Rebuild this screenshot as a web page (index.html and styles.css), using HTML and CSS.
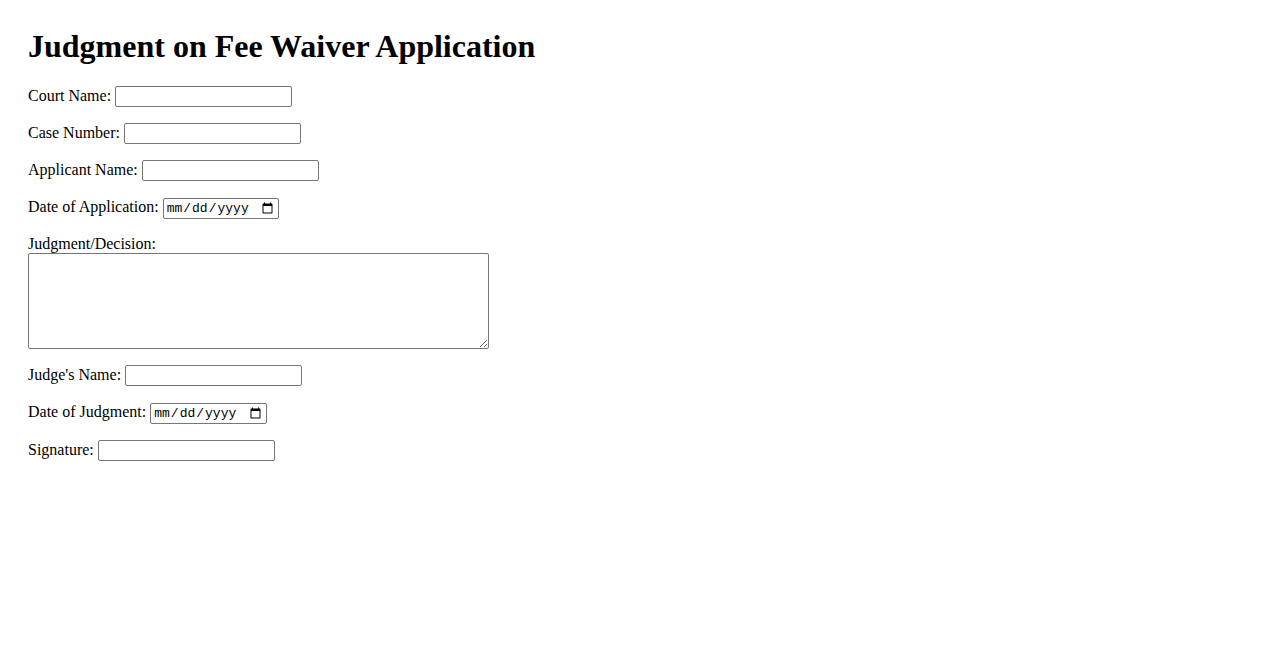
FILE: index.html
```html
<!DOCTYPE html>
<html lang="en">
<head>
<meta charset="utf-8">
<title>Judgment on Fee Waiver Application</title>
<link rel="stylesheet" href="styles.css">
</head>
<body>
<div class="page">
  <h1 class="title">Judgment on Fee Waiver Application</h1>
  <form class="form">
    <div class="field"><label for="court">Court Name:</label> <input class="text" id="court" type="text"></div>
    <div class="field"><label for="case">Case Number:</label> <input class="text" id="case" type="text"></div>
    <div class="field"><label for="applicant">Applicant Name:</label> <input class="text" id="applicant" type="text"></div>
    <div class="field"><label for="appdate">Date of Application:</label> <input class="date" id="appdate" type="date"></div>
    <div class="field"><label class="block" for="decision">Judgment/Decision:</label><textarea class="area" id="decision"></textarea></div>
    <div class="field"><label for="judge">Judge's Name:</label> <input class="text" id="judge" type="text"></div>
    <div class="field"><label for="jdate">Date of Judgment:</label> <input class="date date-j" id="jdate" type="date"></div>
    <div class="field"><label for="sig">Signature:</label> <input class="text" id="sig" type="text"></div>
  </form>
</div>
</body>
</html>
```
FILE: styles.css
```css
html, body {
  margin: 0;
  padding: 0;
  background: #fff;
}
body {
  font-family: "Liberation Serif", "Times New Roman", serif;
  font-size: 16px;
  color: #000;
}
.page {
  padding: 28px 28px;
}
.title {
  font-size: 32px;
  font-weight: bold;
  margin: 0 0 20px;
  line-height: 37px;
}
.field {
  margin-bottom: 15px;
  line-height: 22px;
}
.block {
  display: block;
  line-height: 19px;
}
.text {
  box-sizing: border-box;
  width: 177px;
  height: 21px;
  border: 1px solid #767676;
  border-radius: 2px;
  padding: 1px 2px;
  font-family: "Liberation Sans", Arial, sans-serif;
  font-size: 13.33px;
  vertical-align: baseline;
  margin: 0;
}
.date {
  box-sizing: border-box;
  width: 116px;
  height: 21px;
  border: 1px solid #767676;
  border-radius: 2px;
  padding: 1px 2px;
  font-family: "Liberation Mono", "DejaVu Sans Mono", monospace;
  font-size: 13px;
  margin: 0;
}
.date-j {
  width: 117px;
}
.area {
  display: block;
  box-sizing: border-box;
  width: 461px;
  height: 96px;
  border: 1px solid #767676;
  border-radius: 2px;
  margin: 0 0 1px;
  padding: 2px;
  font-family: "Liberation Mono", monospace;
  font-size: 13.33px;
}
```
